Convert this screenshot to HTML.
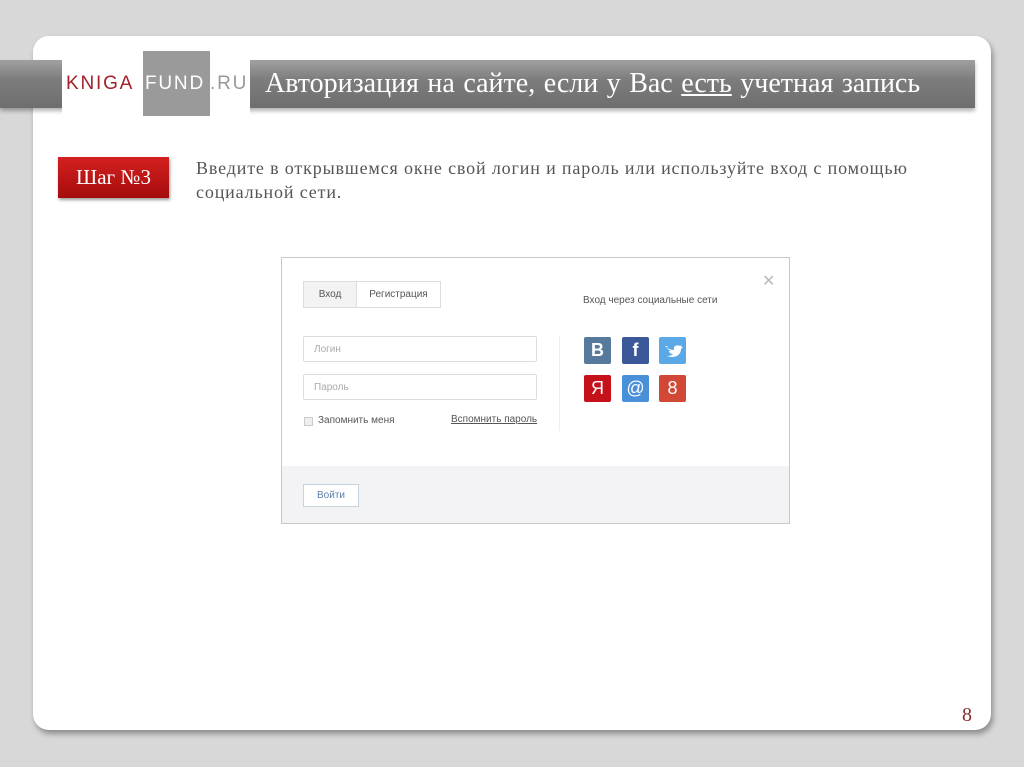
<!DOCTYPE html>
<html><head><meta charset="utf-8"><style>
body{margin:0;width:1024px;height:767px;background:#d8d8d8;position:relative;overflow:hidden;font-family:"Liberation Sans",sans-serif}
.card{position:absolute;left:33px;top:36px;width:958px;height:694px;background:#fff;border-radius:16px;box-shadow:2px 4px 6px rgba(0,0,0,.35)}
.band{position:absolute;left:0;top:60px;width:975px;height:48px;background:linear-gradient(#a0a0a0,#7d7d7d 40%,#6e6e6e);box-shadow:0 3px 4px rgba(0,0,0,.3)}
.logo{position:absolute;left:62px;top:50px;width:188px;height:68px;background:#fff}
.sq{position:absolute;left:143px;top:51px;width:67px;height:65px;background:#9a9a9a}
.lt{position:absolute;top:73px;font-size:19px;letter-spacing:1.8px;white-space:nowrap}
.title{position:absolute;left:265px;top:68px;font-family:"Liberation Serif",serif;font-size:28px;color:#fff;white-space:nowrap;word-spacing:1.5px}
.step{position:absolute;left:58px;top:157px;width:111px;height:41px;background:linear-gradient(#d42020,#a50c0c);color:#fff;font-family:"Liberation Serif",serif;font-size:21px;text-align:center;line-height:41px;box-shadow:1px 2px 3px rgba(0,0,0,.4)}
.txt{position:absolute;left:196px;top:156px;font-family:"Liberation Serif",serif;font-size:18px;letter-spacing:0.85px;color:#555;line-height:24px;width:760px;white-space:nowrap}
.dlg{position:absolute;left:281px;top:257px;width:507px;height:265px;border:1px solid #c8c8c8;background:#fff;font-size:10px;color:#555}
.foot{position:absolute;left:0;top:208px;width:507px;height:57px;background:#f3f3f5}
.inp{position:absolute;left:21px;width:234px;height:26px;border:1px solid #ddd;border-radius:2px;color:#aaa;line-height:26px;padding-left:10px;box-sizing:border-box}
.ic{position:absolute;width:27px;height:27px;border-radius:2px;color:#fff;font-weight:bold;text-align:center;line-height:27px;font-size:18px}
</style></head><body>
<div class="card"></div>
<div class="band"></div>
<div class="logo"></div>
<div class="sq"></div>
<div class="lt" style="left:66px;color:#a3212b">KNIGA</div>
<div class="lt" style="left:145px;color:#fff">FUND</div>
<div class="lt" style="left:210px;color:#999">.RU</div>
<div class="title">Авторизация на сайте, если у Вас <u>есть</u> учетная запись</div>
<div class="step">Шаг №3</div>
<div class="txt">Введите в открывшемся окне свой логин и пароль или используйте вход с помощью<br>социальной сети.</div>
<div class="dlg">
 <div class="foot"></div>
 <div style="position:absolute;left:21px;top:23px;width:138px;height:27px;border:1px solid #ddd;box-sizing:border-box;display:flex;line-height:25px">
  <div style="width:52px;background:#f3f3f3;text-align:center;border-right:1px solid #ddd">Вход</div><div style="flex:1;text-align:center">Регистрация</div></div>
 <div class="inp" style="top:78px">Логин</div>
 <div class="inp" style="top:116px">Пароль</div>
 <div style="position:absolute;left:22px;top:159px;width:7px;height:7px;border:1px solid #ccc;background:#eee"></div>
 <div style="position:absolute;left:36px;top:157px">Запомнить меня</div>
 <div style="position:absolute;left:169px;top:156px;text-decoration:underline">Вспомнить пароль</div>
 <div style="position:absolute;left:277px;top:78px;width:1px;height:95px;background:#eee"></div>
 <div style="position:absolute;left:301px;top:37px">Вход через социальные сети</div>
 <div style="position:absolute;left:480px;top:13px;font-size:16px;color:#bbb">✕</div>
 <div class="ic" style="left:302px;top:79px;background:#56799c">B</div>
 <div class="ic" style="left:340px;top:79px;background:#3b5998">f</div>
 <div class="ic" style="left:377px;top:79px;background:#5aa8e6"><svg width="27" height="27" viewBox="0 0 27 27"><path d="M6 9c3 3 6 4 9 4c-1-4 3-6 6-4l2-1-1 2 2 0-2 2c0 6-6 10-14 7c3 0 5-1 6-2c-3 0-4-2-4-3h2c-3-1-4-3-4-4l2 1c-2-1-2-3-2-2z" fill="#fff"/></svg></div>
 <div class="ic" style="left:302px;top:117px;background:#c4111a;font-weight:normal">Я</div>
 <div class="ic" style="left:340px;top:117px;background:#4a90d9;font-weight:normal">@</div>
 <div class="ic" style="left:377px;top:117px;background:#d14836;font-weight:normal">8</div>
 <div style="position:absolute;left:21px;top:226px;width:56px;height:23px;border:1px solid #c8d3e0;box-sizing:border-box;text-align:center;line-height:21px;color:#5a7ea8;background:#fff">Войти</div>
</div>
<div style="position:absolute;left:962px;top:704px;font-family:'Liberation Serif',serif;font-size:20px;color:#8b2b2b">8</div>
</body></html>
